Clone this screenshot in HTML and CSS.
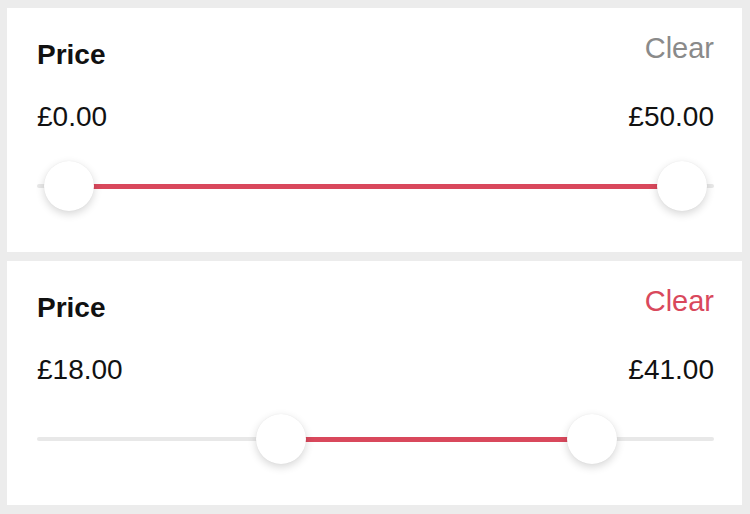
FILE: index.html
```html
<!DOCTYPE html>
<html lang="en">
<head>
    <meta charset="UTF-8">
    <title>Price filter</title>
    <link rel="stylesheet" href="styles.css">
</head>
<body>
<div class="filter">
    <div class="head">
        <div class="title">Price</div>
        <div class="clear">Clear</div>
    </div>
    <div class="values">
        <div>£0.00</div>
        <div>£50.00</div>
    </div>
    <div class="slider">
        <div class="track"></div>
        <div class="fill" style="left: 4.72%; width: 90.56%;"></div>
        <div class="thumb" style="left: 4.72%;"></div>
        <div class="thumb" style="left: 95.28%;"></div>
    </div>
</div>

<div class="filter">
    <div class="head">
        <div class="title">Price</div>
        <div class="clear active">Clear</div>
    </div>
    <div class="values">
        <div>£18.00</div>
        <div>£41.00</div>
    </div>
    <div class="slider">
        <div class="track"></div>
        <div class="fill" style="left: 36%; width: 46%;"></div>
        <div class="thumb" style="left: 36%;"></div>
        <div class="thumb" style="left: 82%;"></div>
    </div>
</div>
</body>
</html>
```

FILE: styles.css
```css
* {
    box-sizing: border-box;
}

body {
    margin: 0;
    padding: 8px 8px 0 7px;
    background-color: #ececec;
    font-family: "Liberation Sans", Arial, sans-serif;
    color: #111;
}

.filter {
    background-color: #fff;
    height: 244px;
    padding: 26px 28px 0 30px;
    margin-bottom: 9px;
}

.filter .head {
    display: flex;
    justify-content: space-between;
    align-items: flex-start;
}

.filter .title {
    margin-top: 7px;
    font-size: 28px;
    line-height: 1;
    font-weight: bold;
}

.filter .clear {
    font-size: 29px;
    line-height: 1;
    color: #8a8a8a;
}

.filter .clear.active {
    color: #d9485c;
}

.filter .values {
    display: flex;
    justify-content: space-between;
    margin-top: 34px;
    font-size: 28px;
    line-height: 1;
}

.slider {
    position: relative;
    height: 50px;
    margin-top: 30px;
}

.slider .track {
    position: absolute;
    left: 0;
    right: 0;
    top: 23px;
    height: 4px;
    border-radius: 2px;
    background-color: #e8e8e8;
}

.slider .fill {
    position: absolute;
    top: 23px;
    height: 5px;
    background-color: #d9485c;
}

.slider .thumb {
    position: absolute;
    top: 0;
    width: 50px;
    height: 50px;
    margin-left: -25px;
    border-radius: 50%;
    background-color: #fff;
    box-shadow: 0 3px 9px rgba(0, 0, 0, 0.16), 0 0 1px rgba(0, 0, 0, 0.08);
}
```
